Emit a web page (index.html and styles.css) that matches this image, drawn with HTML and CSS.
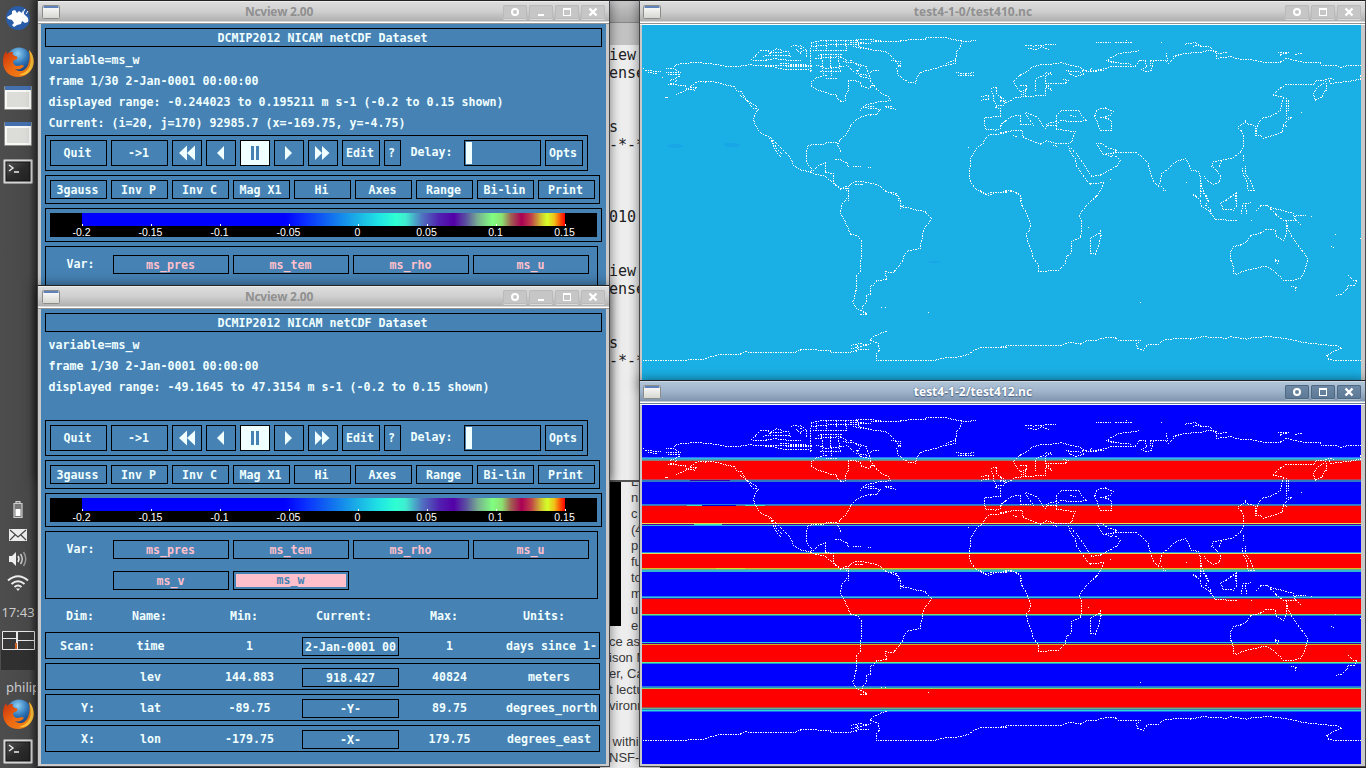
FILE: index.html
```html
<!DOCTYPE html>
<html lang="en">
<head>
<meta charset="utf-8">
<title>Ncview 2.00</title>
<link rel="stylesheet" href="styles.css">
</head>
<body>
<svg width="0" height="0" class="defs">
  <defs>
    <linearGradient id="fox" x1="0" y1="0" x2="1" y2="1"><stop offset="0" stop-color="#c8300c"/><stop offset=".5" stop-color="#ee6a12"/><stop offset="1" stop-color="#f08a18"/></linearGradient>
    <radialGradient id="globe" cx=".45" cy=".25" r=".8"><stop offset="0" stop-color="#8fd0f4"/><stop offset=".5" stop-color="#2f76b8"/><stop offset="1" stop-color="#12346c"/></radialGradient>
    <linearGradient id="paper" x1="0" y1="0" x2="0" y2="1"><stop offset="0" stop-color="#fff"/><stop offset="1" stop-color="#d4d6d0"/></linearGradient>
    <linearGradient id="termbg" x1="0" y1="0" x2="1" y2="1"><stop offset="0" stop-color="#555"/><stop offset=".5" stop-color="#2c2c2c"/><stop offset="1" stop-color="#222"/></linearGradient>
    <symbol id="firefox" viewBox="0 0 32 32">
      <circle cx="17" cy="14" r="12.5" fill="url(#globe)"/>
      <path d="M27 4C30 7 32 12 31.500 17C31 25 24 31 16 31C8 31 1 25 1 16C1 11 2 8 4 5L5 8C7 6 9 6 11 6C10 8 11 9 13 10C15 10 16 11 15 13L11 15C11 18 13 20 16 20C18 20 20 18 22 20C20 23 16 24 13 23C17 27 24 25 26 19C28 14 28 9 27 4Z" fill="url(#fox)"/>
      <path d="M27 4C33 10 33 20 28 25C25 29 20 30 17 29C24 27 28 22 28.500 17C29 12 28 8 27 4Z" fill="#fbc43a"/>
    </symbol>
    <symbol id="apwin" viewBox="0 0 30 26">
      <rect x="1" y="1" width="28" height="24" rx="1" fill="#8d8f8b"/>
      <rect x="2" y="1" width="26" height="5" fill="#4470ae"/>
      <rect x="2" y="5" width="26" height="19" fill="#f8f8f6"/>
      <rect x="4" y="7" width="22" height="15" fill="#dcddd8"/>
    </symbol>
    <symbol id="terminal" viewBox="0 0 30 26">
      <rect x=".5" y=".5" width="29" height="24" rx="1" fill="#d5d5d5" stroke="#999"/>
      <rect x="3" y="3" width="24" height="19" fill="url(#termbg)" stroke="#111"/>
      <path d="M6 6L10 9L6 12M11 13H16" fill="none" stroke="#eee" stroke-width="1.400"/>
    </symbol>
    <symbol id="winicon" viewBox="0 0 18 15">
      <rect x=".5" y=".5" width="17" height="13" rx="1" fill="url(#paper)" stroke="#8c8c88"/>
      <rect x="1.500" y="1" width="15" height="2" fill="#5f82bb"/>
    </symbol>
    <symbol id="b-shade" viewBox="0 0 24 14"><circle cx="12" cy="7" r="3" fill="none" stroke="#fff" stroke-width="2"/></symbol>
    <symbol id="b-min" viewBox="0 0 24 14"><rect x="9" y="9" width="6" height="2" fill="#fff"/></symbol>
    <symbol id="b-max" viewBox="0 0 24 14"><path d="M8 3H16V11H8ZM9 5V10H15V5Z" fill="#fff" fill-rule="evenodd"/></symbol>
    <symbol id="b-close" viewBox="0 0 24 14"><path d="M8.500 3.500L15.500 10.500M15.500 3.500L8.500 10.500" stroke="#fff" stroke-width="2.400"/></symbol>
  </defs>
</svg>

<div class="desktop">
  <div class="editor">
    <div class="editor-title"></div>
    <div class="editor-tabs"></div>
    <pre class="editor-text">iew
ense


s
-*-*



010


iew
ense


s
-*-*</pre>
  </div>
  <div class="browser">
    <div class="browser-top">
      <div class="black-pic"></div>
      <div class="column-text">L<br>n<br>c<br>(4<br>p<br>fu<br>to<br>m<br>u<br>e</div>
    </div>
    <div class="body-text">ce as<br>ison M<br>er, Ca<br>t lectu<br>vironm</div>
    <div class="body-text second">&nbsp;within<br>NSF-f</div>
  </div>

  <aside class="sidebar">
    <div class="slot launcher"><svg width="26" height="26" viewBox="0 0 26 26"><circle cx="13" cy="13" r="12" fill="#2b5ca8"/><path d="M2 12L7 9L7 6L10 5L12 8L14 6L17 8L18 5L19 9L21 11C23 12 24 15 23 17L20 18L17 16L16 19L12 20L9 22L7 20L9 18L7 15L3 14Z" fill="#fff"/><path d="M18 8L20 4M21 9L23 6" stroke="#fff"/></svg></div>
    <div class="slot gap-top"><svg width="32" height="32"><use href="#firefox"/></svg></div>
    <div class="slot"><svg width="30" height="26"><use href="#apwin"/></svg></div>
    <div class="slot"><svg width="30" height="26"><use href="#apwin"/></svg></div>
    <div class="slot term"><svg width="30" height="26"><use href="#terminal"/></svg></div>
    <div class="tray">
      <div class="tray-slot"><svg width="12" height="18" viewBox="0 0 12 18"><path d="M4 2V.500H8V2M2 2.500H10V16.500H2Z" fill="#777" stroke="#ccc" stroke-width="1.200"/><rect x="3.500" y="8" width="5" height="7" fill="#fff"/></svg></div>
      <div class="tray-slot mail"><svg width="18" height="12" viewBox="0 0 18 12"><rect width="18" height="12" fill="#ececec"/><path d="M1 1L9 8L17 1M1 11L6 6M17 11L12 6" fill="none" stroke="#444" stroke-width="1.100"/></svg></div>
      <div class="tray-slot"><svg width="20" height="16" viewBox="0 0 20 16"><path d="M1 5H4L8 1V15L4 11H1Z" fill="#eee"/><path d="M10 5Q12 8 10 11" fill="none" stroke="#eee" stroke-width="1.500"/><path d="M12.500 3Q16 8 12.500 13" fill="none" stroke="#ccc" stroke-width="1.500"/><path d="M15.500 1Q20 8 15.500 15" fill="none" stroke="#999" stroke-width="1.500"/></svg></div>
      <div class="tray-slot"><svg width="22" height="16" viewBox="0 0 22 16"><path d="M1 5.500Q11-3 21 5.500M4.500 9Q11 3.500 17.500 9M7.500 12Q11 9 14.500 12" fill="none" stroke="#eee" stroke-width="2"/><path d="M9 13.500L11 16L13 13.500Z" fill="#eee"/></svg></div>
      <div class="clock">17:43</div>
      <div class="pager"><svg width="34" height="41" viewBox="0 0 34 41"><rect y="20" width="34" height="20" fill="#303030"/><rect x=".5" y="1.500" width="33" height="18" fill="#383838"/><path d="M1.500 1.500H33.500V19.500H1.500ZM1.500 8.500H15.500V19.500M15.500 1.500V9M16.500 1.500V19.500M16.500 10.500H33.500" fill="none" stroke="#e8e8e8"/><rect x="14" y="13" width="2" height="6" fill="#d06020"/></svg></div>
      <div class="user">philip</div>
      <div class="slot"><svg width="32" height="32"><use href="#firefox"/></svg></div>
      <div class="slot term"><svg width="30" height="26"><use href="#terminal"/></svg></div>
    </div>
  </aside>

  <section class="window nc-one">
    <header class="titlebar"><svg class="win-icon" width="18" height="15"><use href="#winicon"/></svg><span class="title">Ncview 2.00</span><span class="buttons"><svg><use href="#b-shade"/></svg><svg><use href="#b-min"/></svg><svg><use href="#b-max"/></svg><svg><use href="#b-close"/></svg></span></header>
    <div class="nc" id="nc1"></div>
  </section>

  <section class="window nc-two">
    <header class="titlebar"><svg class="win-icon" width="18" height="15"><use href="#winicon"/></svg><span class="title">Ncview 2.00</span><span class="buttons"><svg><use href="#b-shade"/></svg><svg><use href="#b-min"/></svg><svg><use href="#b-max"/></svg><svg><use href="#b-close"/></svg></span></header>
    <div class="nc" id="nc2"></div>
  </section>

  <section class="window map-one">
    <header class="titlebar"><svg class="win-icon" width="18" height="15"><use href="#winicon"/></svg><span class="title">test4-1-0/test410.nc</span><span class="buttons"><svg><use href="#b-shade"/></svg><svg><use href="#b-max"/></svg><svg><use href="#b-close"/></svg></span></header>
    <svg class="map plain" width="719" height="359" viewBox="642 25 719 359"><g fill="#18a6e6"><path d="M666 146L672 144H679L684 146L677 148H672Z"/><path d="M723 144L728 143H735L741 145L737 147H728Z"/><path d="M927 261H942L938 263H931Z"/></g><path class="coast"/></svg>
  </section>

  <section class="window map-two active">
    <header class="titlebar"><svg class="win-icon" width="18" height="15"><use href="#winicon"/></svg><span class="title">test4-1-2/test412.nc</span><span class="buttons"><svg><use href="#b-shade"/></svg><svg><use href="#b-max"/></svg><svg><use href="#b-close"/></svg></span></header>
    <svg class="map bands" width="719" height="359" viewBox="642 25 719 359"><path d="M690 100.500H730" stroke="#3a00b0"/><path d="M694 144.500H722" stroke="#40e0c0"/><path d="M687 125.500H702M745 125.500H765" stroke="#40e0c0"/><path d="M702 125.500H736" stroke="#0000d0"/><path d="M716 188.500H745" stroke="#d0e828"/><path class="coast"/></svg>
  </section>
</div>
<script src="app.js"></script>
</body>
</html>
```
FILE: styles.css
```css
* { box-sizing: border-box; }
body { margin: 0; background: #4b4b4b; overflow: hidden; }
svg { display: block; flex: none; }
.defs { position: absolute; }
.desktop { position: relative; width: 1366px; height: 768px; overflow: hidden; background: #1d1d20; }

/* windows behind the plots */
.editor { position: absolute; left: 600px; top: 1px; width: 60px; height: 481px; background: #efefef; border-bottom: 2px solid #555; }
.editor-title { height: 22px; background: linear-gradient(#c8c8c8, #a6a6a6); border-bottom: 1px solid #888; }
.editor-tabs { height: 22px; background: #c4c4c4; }
.editor-text { margin: 0; padding: 1px 0 0 9px; font: 15px/18px "DejaVu Sans Mono", monospace; color: #222; }
.browser { position: absolute; left: 600px; top: 482px; width: 60px; height: 286px; background: #efefef; font: 13px/16px "Liberation Sans", Arial, sans-serif; color: #3a3a3a; overflow: hidden; white-space: nowrap; }
.browser-top { display: flex; gap: 10px; height: 152px; }
.black-pic { width: 21px; height: 144px; background: #000; }
.column-text { margin-top: -8px; }
.body-text { padding-left: 9px; }
.body-text.second { padding-top: 20px; }

/* panel */
.sidebar { position: absolute; left: 0; top: 0; width: 37px; height: 768px; display: flex; flex-direction: column; background: linear-gradient(90deg, #4d4d4d, #494949 80%, #343434); overflow: hidden; }
.slot { height: 36px; width: 36px; display: flex; align-items: center; justify-content: center; flex: none; }
.slot.term { padding-top: 3px; }
.gap-top { margin-top: 8px; }
.tray { margin-top: auto; width: 36px; }
.tray-slot { height: 24.300px; display: flex; align-items: center; justify-content: center; }
.tray-slot.mail { padding-top: 2px; }
.clock { height: 35px; padding-top: 1px; text-align: center; font: 13px/32px "Noto Sans", sans-serif; color: #ccc; }
.pager { height: 41px; padding-left: 1px; }
.user { height: 25px; padding: 7px 0 0 6px; font: 13px/18px "Noto Sans", sans-serif; color: #ccc; overflow: hidden; white-space: nowrap; }

/* window frame */
.window { position: absolute; background: #c9c9c9; border: 1px solid #46464a; border-top-color: #222; box-shadow: 0 0 11px rgba(0, 0, 0, .5); }
.nc-one { left: 37px; top: 0; width: 573px; height: 480px; padding: 0 3px 2px; }
.nc-two { left: 37px; top: 285px; width: 573px; height: 482px; padding: 0 3px 2px; }
.map-one { left: 639px; top: 0; width: 727px; height: 388px; padding: 0 3px 2px 2px; }
.map-two { left: 639px; top: 380px; width: 727px; height: 387px; padding: 0 3px 2px 2px; }
.titlebar { height: 23px; margin: 0 -3px; padding: 0 4px 2px; display: flex; align-items: center; background: linear-gradient(#fff 0, #dcdcdc 1px, #d0d0d0 10px, #b0b0b0 20px, #fff 21px, #fff 22px, #929292 22px); }
.map-one .titlebar, .map-two .titlebar { height: 24px; margin: 0 -3px 0 -2px; padding: 0 4px 2px 3px; border-bottom: 1px solid #fff; }
.active .titlebar { background: linear-gradient(#e8f0f8 0, #b0c4d8 1px, #a0b6cc 10px, #8095ae 20px, #fff 21px, #fff 22px, #6c8098 22px); }
.win-icon { position: relative; top: 1px; }
.title { flex: 1; text-align: center; font: bold 12px/22px "Open Sans", "Noto Sans", sans-serif; color: #909090; letter-spacing: -.25px; padding-right: 5px; }
.map-one .title, .map-two .title { letter-spacing: 0; padding-right: 0; }
.active .title { color: #fff; text-shadow: 0 0 2px #50688a, 0 1px 1px #50688a; }
.buttons { display: flex; gap: 2px; }
.buttons svg { width: 24px; height: 14px; border-radius: 2px; background: #c6c6c6; box-shadow: inset 0 0 0 1px #bababa, 0 1px #dadada; }
.active .buttons svg { background: linear-gradient(#6f8aa6, #5c7894); box-shadow: inset 0 0 0 1px #4f6882, 0 1px #a8bace; }
.map.plain { background: #1ab0e6; }
.coast { fill: #fff; shape-rendering: crispEdges; }
.map.bands { background: linear-gradient(#00f 52px, #3070ff 52px 53px, #30b8e8 53px 54px, #4aa0b8 54px 55px, #808080 55px 56px, #f00 56px 74px, #b04060 74px 75px, #3078c0 75px 77px, #00f 77px 99px, #2080e0 99px 100px, #607090 100px 101px, #f00 101px 118px, #e8e050 118px 119px, #5000a0 119px 120px, #30c0d8 120px 121px, #00f 121px 147px, #2090f0 147px 148px, #e0e060 148px 149px, #f00 149px 163px, #d8c020 163px 164px, #70b090 164px 165px, #30b8d0 165px 167px, #00f 167px 191px, #2078f0 191px 192px, #30c8d8 192px 193px, #5020a0 193px 194px, #f00 194px 209px, #70e080 209px 210px, #2080c0 210px 211px, #00f 211px 237px, #20c8e0 237px 238px, #4000a0 238px 239px, #c8b020 239px 240px, #f00 240px 257px, #60f090 257px 258px, #2090d0 258px 259px, #00f 259px 281px, #2070e0 281px 282px, #2890c8 282px 283px, #80d870 283px 284px, #f00 284px 302px, #a05050 302px 303px, #70b080 303px 304px, #3080c0 304px 305px, #20e0e0 305px 306px, #2060f0 306px 307px, #00f 307px); }

/* ncview form */
.nc { height: 455px; padding: 4px; background: #4682b4; color: #f0ffff; font: bold 11.630px/14px "DejaVu Sans Mono", monospace; white-space: pre; overflow: hidden; }
.box { border: 1px solid #000; }
.heading { width: 557px; height: 19px; line-height: 18px; text-align: center; padding-right: 2px; }
.info { height: 88px; padding: 3px 0 0 3.500px; line-height: 21px; }
.row { display: flex; gap: 4px; padding: 4px; }
.btn { border: 1px solid #000; display: flex; align-items: center; justify-content: center; padding: 0 2px 1px 0; width: 57px; height: 19px; flex: none; }
.play { width: 543px; height: 36px; }
.play .btn { height: 26px; }
.play .arrow { width: 30px; padding: 0; }
.play .pressed { background: #f0ffff; }
.play .small { width: 38px; }
.play .q { width: 17px; }
.delay { width: 55px; padding-left: 5.500px; line-height: 24px; }
.play .field { width: 77px; justify-content: flex-start; padding: 1px; }
.cursor { width: 6px; height: 22px; background: #f0ffff; }
.opts { width: 555px; height: 29px; margin-top: 4px; }
.opts .btn { padding-bottom: 0; }
.scale { width: 557px; height: 34px; padding: 4px; margin-top: 4px; }
.scale-in { height: 24px; padding: 0 32px; background: #000; }
.colors { height: 13px; background: linear-gradient(90deg, #00f 42%, #0a2cff 46%, #1068f0 51%, #1ab0e6 57%, #20e4e4 61.500%, #2effd2 65%, #40ecd0 67%, #5070c0 70.500%, #5020b0 74%, #5500a8 77%, #5a50a0 79.500%, #78b090 82%, #80ff80 85%, #8ce070 87%, #a06050 88.800%, #aa0055 91%, #c04048 93%, #d0c030 95%, #d4ff2a 96.300%, #f0c018 97.800%, #ff4000 99.200%, #f00); }
.ticks { display: flex; justify-content: space-between; margin: -2px -16px 0; font: 10.500px/12px "Liberation Sans", Arial, sans-serif; color: #fff; }
.ticks span { width: 32px; height: 13px; text-align: center; padding: 2px 1px 0 0; background: linear-gradient(#fff, #fff) 16px 0 / 1px 2px no-repeat; }
.vars { width: 553px; height: 68px; margin-top: 4px; display: flex; padding-top: 8px; }
.vars-label { width: 67px; padding: 2px 0 0 20.500px; }
.vars-grid { display: grid; grid-template-columns: repeat(4, 116px); gap: 12px 4px; align-content: start; color: #ffc0cb; }
.vars-grid .btn { width: 116px; padding: 1px 1px 0 0; }
.vars-grid .on { box-shadow: inset 0 0 0 2px #4682b4; background: #ffc0cb; color: #4682b4; padding: 0 1px 1px 0; }
.dims { display: flex; flex-direction: column; gap: 4px; }
.dim { width: 555px; height: 27px; display: grid; grid-template-columns: 49px 111px 87px 9px 97px 8px 85px 14px 86px; align-items: center; text-align: center; }
.dim b:first-child { text-align: right; }
.dim .cur { height: 19px; line-height: 18px; overflow: hidden; margin-top: 1px; }
.dim b:last-child { text-align: left; display: flex; justify-content: center; }
.dim b.long { justify-content: flex-start; }
.dim-head { display: flex; height: 33px; padding: 10px 0 0 21px; }
.dim-head b { flex: none; }
.dim-head .left { margin-left: -4px; }
.dim-head .right { margin-left: 2px; }
```
FILE: app.js
```js
// Coastline runs, grouped by map tile: [tile x, tile y, polylines]. Points are thirds of a pixel.
const tiles = [
[640, 0, `9,204 15,212 40,213 62,215;22,218 50,220;68,232;80,204 100,205 120,218 80,218;85,222 118,222;90,240 105,236 118,228;86,252 100,250 108,242;90,253 136,257 140,268 164,270 168,262 150,262
;100,205 108,193 140,190 158,188 190,189 230,193 265,200 300,198 330,194 345,196 375,198 400,200 430,208 500,208 515,212
;76,292 82,292;110,283 130,275 150,262 172,244 195,246 215,245 240,249 262,256 282,260 288,272 304,275 315,293 328,310 340,325 354,328 345,340 340,358 346,375 355,392 368,402 385,408 400,420 415,435 430,450 445,465 455,480 458,494 470,502 485,510 505,515 520,510 537,495 557,488 557,500 555,518 580,520 582,550 600,565 625,565 625,600
;385,408 398,430 405,450 420,470;395,420 410,445 425,460;300,285 320,300 350,318;505,515 530,524 550,526 568,540 585,555 600,568 620,558
;520,510 505,495 498,480 498,455 505,437 520,432 550,432 560,428 590,428 595,440 602,455;595,430 600,418 615,405 628,388 632,375 645,362 665,350 685,343
;660,330 670,318 685,312 700,310 715,305 735,305 750,300 745,290 725,280 710,268 700,255 690,240;690,345 710,342 720,328 700,325 685,325;735,320 750,318 765,328 740,322;665,325 700,318
;515,245 525,235 545,228 560,225;515,245 515,258 530,268 550,275 570,282 590,285 592,298 608,306 615,300 617,285 625,270 625,240 645,242 660,248 665,258 685,265 698,255
;695,125 730,124 780,123 820,118 855,118 860,112 920,112 935,118 960,122 975,125;980,125 1005,121;965,125 962,140 950,155 948,172 945,190 915,196 885,205 860,212 840,218 830,235 825,250 805,246 790,238 775,225 770,205 778,195 765,180 750,165 735,155 700,150 665,142;755,182 780,185 782,200;920,190 945,178
;948,218 975,222 1000,218;955,225 1000,225;585,478 605,480 620,488 625,500;640,500 660,498;685,502 692,502
;620,570 628,555 640,547 660,543 680,548 700,550 720,560 735,572 755,580 775,588 775,600;645,552 668,552
;1025,290 1045,285 1045,298 1025,300;1055,265 1068,262 1068,280 1080,290 1095,300 1090,315 1070,318 1062,305 1060,290 1055,275;1065,323 1080,325 1082,350 1035,352 1033,375 1038,388 1065,390 1080,385 1085,370 1098,362
;1098,398 1070,403 1050,403 1035,415 1028,432 1010,445 1000,460 990,475 990,500 987,530 993,548 1008,568 1030,580 1045,585 1070,578 1098,575;985,442
;335,178 345,168 365,150 385,150 390,165 370,168;340,180 380,182;365,182 400,176 440,180 480,182;390,160 410,145 425,150;395,158 445,155 450,168 400,165;455,138 470,136 490,150 480,160 470,148;480,135 500,150 500,170;420,190 500,195;375,195 515,196;440,200 515,200
;515,128 545,122 600,122 690,118 720,122;515,140 560,135 620,134 690,130;520,150 600,150 620,152;535,165 605,163;530,125 530,150;560,125 560,145;590,120 590,140;615,120 620,150;650,120 660,145
;515,130 510,160 510,215;525,175 600,170 620,180;530,195 560,205 610,200;540,215 600,215;545,165 550,225;570,170 575,225;595,175 600,210;610,185 650,190 680,200;630,180 660,200 650,220 680,225 700,210 715,212;680,205 690,235 660,230 650,210;620,195 640,215;560,235 590,235;640,140 690,148;630,128 670,128`],
[1000, 0, `76,136 100,138 165,132;82,145 110,148 125,140 145,148;290,127 330,127;345,128 395,127;378,122;483,127;415,152 385,157 355,160 335,172 318,182 340,188
;40,245 60,225 80,215 95,203 115,195 150,193 180,188 210,195 240,202 260,212 270,215;40,245 50,262 60,275 80,268 65,282 75,285;60,255 80,255 75,285;75,290 135,285 138,260 155,270 140,250 155,250 195,250 205,242 190,238;105,272 108,235 125,230 140,218 155,222 150,218 135,228 138,255
;205,210 210,222 230,230 250,222 248,210 265,215 275,205;200,212 240,216;270,215 300,208 320,205 330,200 380,200 405,200;320,180 350,188 390,192;405,200 420,180 435,180 440,200 425,208 435,215 455,212 460,180 450,180 450,195;465,180 495,180 505,190 520,175;520,168 560,160 600,157 630,150 650,160 680,158;500,160 502,180;555,132 585,128 600,135 580,138;600,140 625,140 650,155
;650,160 650,175 690,170 720,178 760,180 790,187 840,187 860,175 880,180 910,187 960,188 965,195 1010,197 1025,202 1040,197 1082,197;835,158 865,158 840,165;885,163 905,160;520,175 535,163;270,214 310,212
;1082,222 1080,237 1060,242 1020,247 990,250 985,235 1000,238;990,235 970,240 950,240 940,252 900,254 860,253 840,265 820,282;945,300 940,280 950,265 975,245;945,300 965,292 978,270 980,250;820,285 850,292 845,310 842,330 830,340 810,350 790,352 775,368 770,385
;858,295 860,345;865,300 865,330;860,355 875,352 850,372 848,395 820,405 790,415 780,405 765,405 770,390;850,375 860,378
;735,362 745,372 765,378 770,405;712,380 735,368;712,382 725,392 730,410 730,440 720,458 695,475 660,482 640,485 635,498 650,512 662,530 658,548 640,552 625,545 612,530;658,500 665,485
;730,462 730,480;735,500 735,520 750,540 762,570 745,570 740,545 730,525 728,505;555,475 565,490 575,510 595,515 600,530 605,560 610,575 620,590 625,600;600,535 602,590
;410,458 435,480 445,490 450,515 460,545 475,560 480,548 485,520 500,510 515,495 535,482 555,475;485,558 495,570
;320,460 350,458 410,458;290,432 310,462 335,470 350,450 325,445 305,430 290,430;345,468 360,480 350,498 325,512 300,525 275,530 265,515 250,490 235,470 215,445;205,440 210,455 225,475 230,500 245,520 260,540 270,552 310,548 305,565 290,585 275,600
;0,398 40,392 65,390 70,412 95,422 120,433 140,422 165,430 205,430 215,425 225,395 170,388 170,370 180,362 235,365 260,360 245,345 235,332 185,330 170,345 168,375 145,375 135,385;0,380 15,362 30,352 50,345 62,345 62,365;75,340 90,360 100,375;80,338 110,350 125,370 130,380;140,372 165,365;38,405 48,410;158,435 170,438;60,372 90,372;210,345 225,350
;0,290 10,300 0,305;0,300 20,308 50,292 75,290;285,345 290,330 315,323 340,335 330,345 315,350 335,365 333,390 300,390 292,365 282,345;300,352 325,356
;580,585 600,600;680,600 710,578 710,600;330,538;560,548;905,338;0,578 20,572 40,573 60,585 65,600`],
[640, 190, `625,0 625,20 605,42 602,70 615,95 632,132 655,138 664,150 664,200 660,245 648,260 648,300 642,325 638,335 648,355 665,362 680,372 660,374;735,5 770,10 780,30 782,50 800,52 830,60 855,65 875,85 860,105 850,125 845,150 840,175 805,182 790,198 788,215 770,235 760,248 735,245 740,268 710,272 700,285 690,290 690,312 678,315 680,335 668,348 665,360 680,370
;780,58 790,46;723,352;737,352;865,367;1020,2 1040,12 1060,6 1098,6
;9,511 135,511 150,508 190,508 215,500 230,495 300,492 320,485 330,487 465,487 480,480 500,478 570,482 575,487 630,487 650,480 685,478;740,425 720,430 700,440 690,450 715,460 718,480 710,490 710,511 885,511 910,504 965,500 985,492 1000,482 1020,473 1098,471;635,465 660,460 680,465;635,475 665,470 690,460;655,458 650,485`],
[1000, 190, `0,8 20,2 40,5 60,18 65,45 80,70 92,100 88,122 80,130 82,155 95,180 98,200 115,225 115,245 140,243 175,240 195,220 200,200 215,185 215,155 240,142 245,130 243,90 238,72 260,45 290,20 302,0;300,118 303,135 295,170 285,193 272,190 272,145 285,135 297,130;265,112;490,0
;580,12 600,30 605,50 625,60 640,78;605,5 615,15 625,35 615,45 630,58 640,78 645,88 680,90 710,91;705,10 710,45 700,60 670,58 662,40 680,28 700,15;750,38 728,42 725,70;735,45 740,70;770,60 780,48 800,45 810,55 830,72;755,92
;810,52 850,62 880,70 885,88 900,103;825,72 850,90 885,90;885,78 915,75;935,80
;858,95 860,130 850,150 830,140 825,120 800,118 780,130 755,135 740,155 720,165 700,170 692,185 692,210 700,230 700,250 710,252 730,243 765,235 795,228 815,238 840,260 850,270 880,270 900,265 910,250 920,225 922,205 905,180 890,160 875,140 865,120 858,95;822,208 835,212 832,220 825,212;875,288 888,292 885,300
;1045,255 1060,270 1070,272 1062,285 1045,285 1040,298 1025,312 1008,317;1006,133;995,168 1000,172;1080,145;420,337
;0,472 25,466 180,466 210,457 240,463 260,452 290,450 320,442 345,443 355,450 420,452 410,460 412,475 430,480 440,465 475,463 490,450 535,445 570,447 610,440 680,445 690,440 740,447 760,442 810,440 850,445 880,450 910,458 960,463 1010,467 1025,475 1000,485 980,495 985,508 1000,511 1082,511`]
];

// Walk every run pixel by pixel and keep a "two on, one off, one on, one off" rhythm.
const dots = new Set();
for (const [ox, oy, runs] of tiles) {
  for (const run of runs.split(';')) {
    const pts = run.trim().split(/\s+/).map(p => p.split(',').map(Number)).map(([x, y]) => [ox + x / 3, oy + y / 3]);
    for (let i = 0; i < pts.length; i++) {
      const [x0, y0] = pts[i], [x1, y1] = pts[i + 1] || pts[i];
      const wide = Math.abs(x1 - x0) >= Math.abs(y1 - y0);
      const n = Math.ceil(Math.max(Math.abs(x1 - x0), Math.abs(y1 - y0)));
      for (let k = 0; k <= n; k++) {
        const t = n ? k / n : 0;
        const x = Math.floor(x0 + (x1 - x0) * t), y = Math.floor(y0 + (y1 - y0) * t);
        const phase = (wide ? x : y) % 5;
        if (n && phase !== 0 && phase !== 1 && phase !== 3) continue;
        dots.add(x + ' ' + y + 'h1v1h-1z');
      }
    }
  }
}
const coast = 'M' + [...dots].join('M');
document.querySelectorAll('.coast').forEach(p => p.setAttribute('d', coast));

const arrow = d => `<span class="btn arrow"><svg width="28" height="24"><path d="${d}" fill="#f0ffff"/></svg></span>`;
const btn = t => `<span class="btn">${t}</span>`;
const ticks = ['-0.2', '-0.15', '-0.1', '-0.05', '0', '0.05', '0.1', '0.15'];

function form(info, vars, dims) {
  return `<div class="box heading">DCMIP2012 NICAM netCDF Dataset</div><div class="info">${info.join('\n')}</div>` +
  `<div class="box row play">${btn('Quit')}${btn('-&gt;1')}` +
  arrow('M14 4.500V19.500L6 12ZM22 4.500V19.500L14 12Z') + arrow('M17 5V19L10 12Z') +
  `<span class="btn arrow pressed"><svg width="28" height="24"><path d="M10 5H13V19H10ZM15 5H18V19H15Z" fill="#4682b4"/></svg></span>` +
  arrow('M10 5V19L17 12Z') + arrow('M6 5V19L13 12ZM13 5V19L20.500 12Z') +
  `<span class="btn small">Edit</span><span class="btn q">?</span><span class="delay">Delay:</span><span class="btn field"><i class="cursor"></i></span><span class="btn small">Opts</span></div>` +
  `<div class="box row opts">${['3gauss', 'Inv P', 'Inv C', 'Mag X1', 'Hi', 'Axes', 'Range', 'Bi-lin', 'Print'].map(btn).join('')}</div>` +
  `<div class="box scale"><div class="scale-in"><div class="colors"></div><div class="ticks">${ticks.map(t => `<span>${t}</span>`).join('')}</div></div></div>` +
  `<div class="box vars"><span class="vars-label">Var:</span><div class="vars-grid">${vars.map(v => `<span class="btn${v === 'ms_w' ? ' on' : ''}">${v}</span>`).join('')}</div></div>` + dims;
}

const vars = ['ms_pres', 'ms_tem', 'ms_rho', 'ms_u', 'ms_v', 'ms_w'];
const rows = [
  ['Scan:', 'time', '1', '2-Jan-0001 00', '1', 'days since 1-'],
  ['', 'lev', '144.883', '918.427', '40824', 'meters'],
  ['Y:', 'lat', '-89.75', '-Y-', '89.75', 'degrees_north'],
  ['X:', 'lon', '-179.75', '-X-', '179.75', 'degrees_east']
];
const dims = `<div class="dim-head"><b>Dim:      </b><b class="left">Name:         </b><b>Min:        </b><b class="right">Current:        </b><b class="right">Max:         </b><b class="right">Units:</b></div><div class="dims">` +
  rows.map(([d, n, mi, c, ma, u]) => `<div class="box dim"><b>${d}</b><b>${n}</b><b>${mi}</b><i></i><b class="box cur">${c}</b><i></i><b>${ma}</b><i></i><b class="${u.length > 12 ? 'long' : ''}">${u}</b></div>`).join('') + '</div>';

document.getElementById('nc1').innerHTML = form(['variable=ms_w', 'frame 1/30 2-Jan-0001 00:00:00', 'displayed range: -0.244023 to 0.195211 m s-1 (-0.2 to 0.15 shown)', 'Current: (i=20, j=170) 92985.7 (x=-169.75, y=-4.75)'], vars.slice(0, 4), '');
document.getElementById('nc2').innerHTML = form(['variable=ms_w', 'frame 1/30 2-Jan-0001 00:00:00', 'displayed range: -49.1645 to 47.3154 m s-1 (-0.2 to 0.15 shown)'], vars, dims);
```
